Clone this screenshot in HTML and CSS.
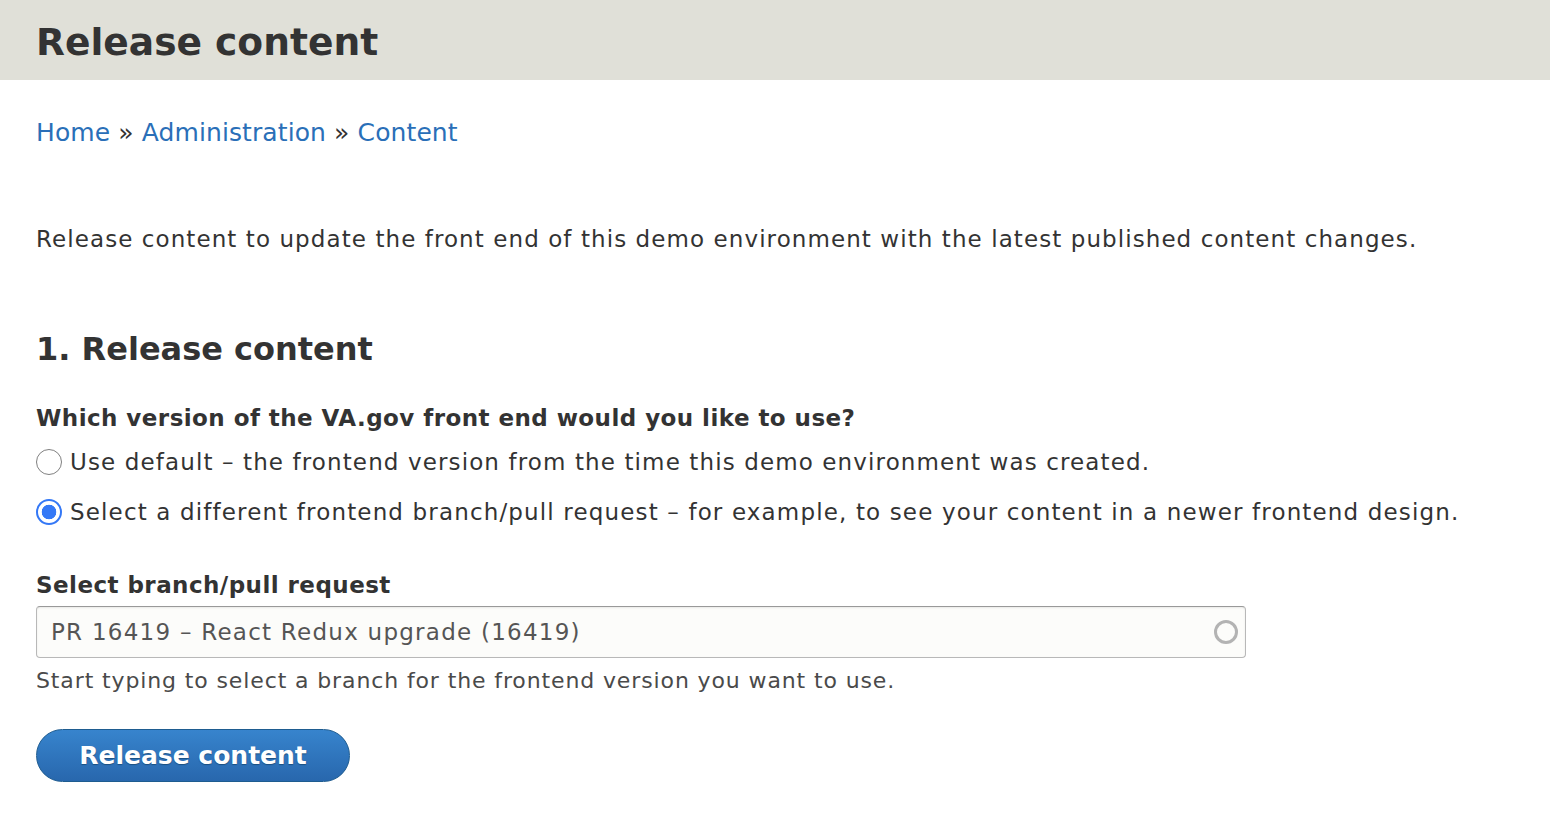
FILE: index.html
```html
<!DOCTYPE html>
<html>
<head>
<meta charset="utf-8">
<link rel="stylesheet" href="styles.css">
</head>
<body>
<header class="page-header">
  <h1 class="page-title">Release content</h1>
</header>
<main class="content">
  <nav class="breadcrumb"><a href="#">Home</a> » <a href="#">Administration</a> » <a href="#">Content</a></nav>
  <p class="intro">Release content to update the front end of this demo environment with the latest published content changes.</p>
  <h2 class="section-title">1. Release content</h2>
  <form class="release-form">
    <div class="radios" role="radiogroup">
      <div class="label">Which version of the VA.gov front end would you like to use?</div>
      <label class="radio"><input type="radio" name="v"><span class="narrow">Use default – the frontend version from the time this demo environment was created.</span></label>
      <label class="radio"><input type="radio" name="v" checked><span class="wide">Select a different frontend branch/pull request – for example, to see your content in a newer frontend design.</span></label>
    </div>
    <div class="field">
      <label class="label" for="branch">Select branch/pull request</label>
      <div class="input-wrap">
        <input id="branch" class="text-input" type="text" value="PR 16419 – React Redux upgrade (16419)">
        <span class="throbber"></span>
      </div>
      <div class="description">Start typing to select a branch for the frontend version you want to use.</div>
    </div>
    <button type="button" class="button">Release content</button>
  </form>
</main>
</body>
</html>
```
FILE: styles.css
```css
html, body { margin: 0; padding: 0; }
body {
  font-family: "DejaVu Sans", sans-serif;
  color: #333;
  background: #fff;
  font-size: 23px;
  letter-spacing: 1px;
  line-height: 30px;
}
.page-header {
  background: #e0e0d8;
  height: 80px;
  box-sizing: border-box;
  padding: 4px 36px 0;
  display: flex;
  align-items: center;
}
.page-title {
  margin: 0;
  font-size: 37.6px;
  line-height: 44px;
  font-weight: bold;
  letter-spacing: 0;
  color: #333;
}
.content { padding: 0 36px; }
.breadcrumb {
  margin-top: 38px;
  font-size: 25px;
  letter-spacing: 0.1px;
  line-height: 30px;
  color: #333;
}
.breadcrumb a { color: #2a6fb8; text-decoration: none; }
.intro { margin: 76px 0 0; letter-spacing: 1.08px; }
.section-title {
  margin: 75px 0 0;
  font-size: 32px;
  line-height: 40px;
  letter-spacing: 0;
  font-weight: bold;
}
.radios { margin-top: 34px; }
.label {
  font-weight: bold;
  display: block;
  letter-spacing: 0.45px;
}
.radios .label { margin-bottom: 4px; }
.radio { display: flex; align-items: center; gap: 8px; height: 50px; }
.radio .narrow { letter-spacing: 1.12px; }
.radio .wide { letter-spacing: 1.15px; }
.radio input {
  appearance: none;
  -webkit-appearance: none;
  margin: 0;
  width: 26px; height: 26px;
  border: 1.5px solid #808080;
  border-radius: 50%;
  background: #fff;
  box-sizing: border-box;
  flex: none;
}
.radio input:checked {
  border: 2px solid #3478f6;
  background: radial-gradient(circle, #3478f6 0 7px, #fff 7.6px);
}
.field { margin-top: 33px; }
.field .label { margin-bottom: 6px; }
.input-wrap { position: relative; width: 1210px; }
.text-input {
  display: block;
  width: 100%;
  height: 52px;
  box-sizing: border-box;
  border: 1px solid #b8b8b8;
  border-top-color: #999;
  border-radius: 4px;
  background: #fcfcfa;
  box-shadow: inset 0 1px 2px rgba(0, 0, 0, 0.08);
  padding: 0 14px;
  font: inherit;
  letter-spacing: 1.25px;
  color: #555;
}
.throbber {
  position: absolute;
  right: 8px; top: 14px;
  width: 24px; height: 24px;
  border: 3.5px solid #b3b3b3;
  border-radius: 50%;
  box-sizing: border-box;
}
.description {
  margin-top: 8px;
  color: #4a4a4a;
  font-size: 22px;
  letter-spacing: 0.88px;
}
.button {
  display: block;
  margin-top: 33px;
  width: 314px; height: 53px;
  border-radius: 27px;
  border: 1px solid #1e5c90;
  background: linear-gradient(#3784cd, #2867ad);
  color: #fff;
  font: bold 25px "DejaVu Sans", sans-serif;
  text-shadow: 0 1px 1px #1b4f80;
  padding: 0;
}
```
